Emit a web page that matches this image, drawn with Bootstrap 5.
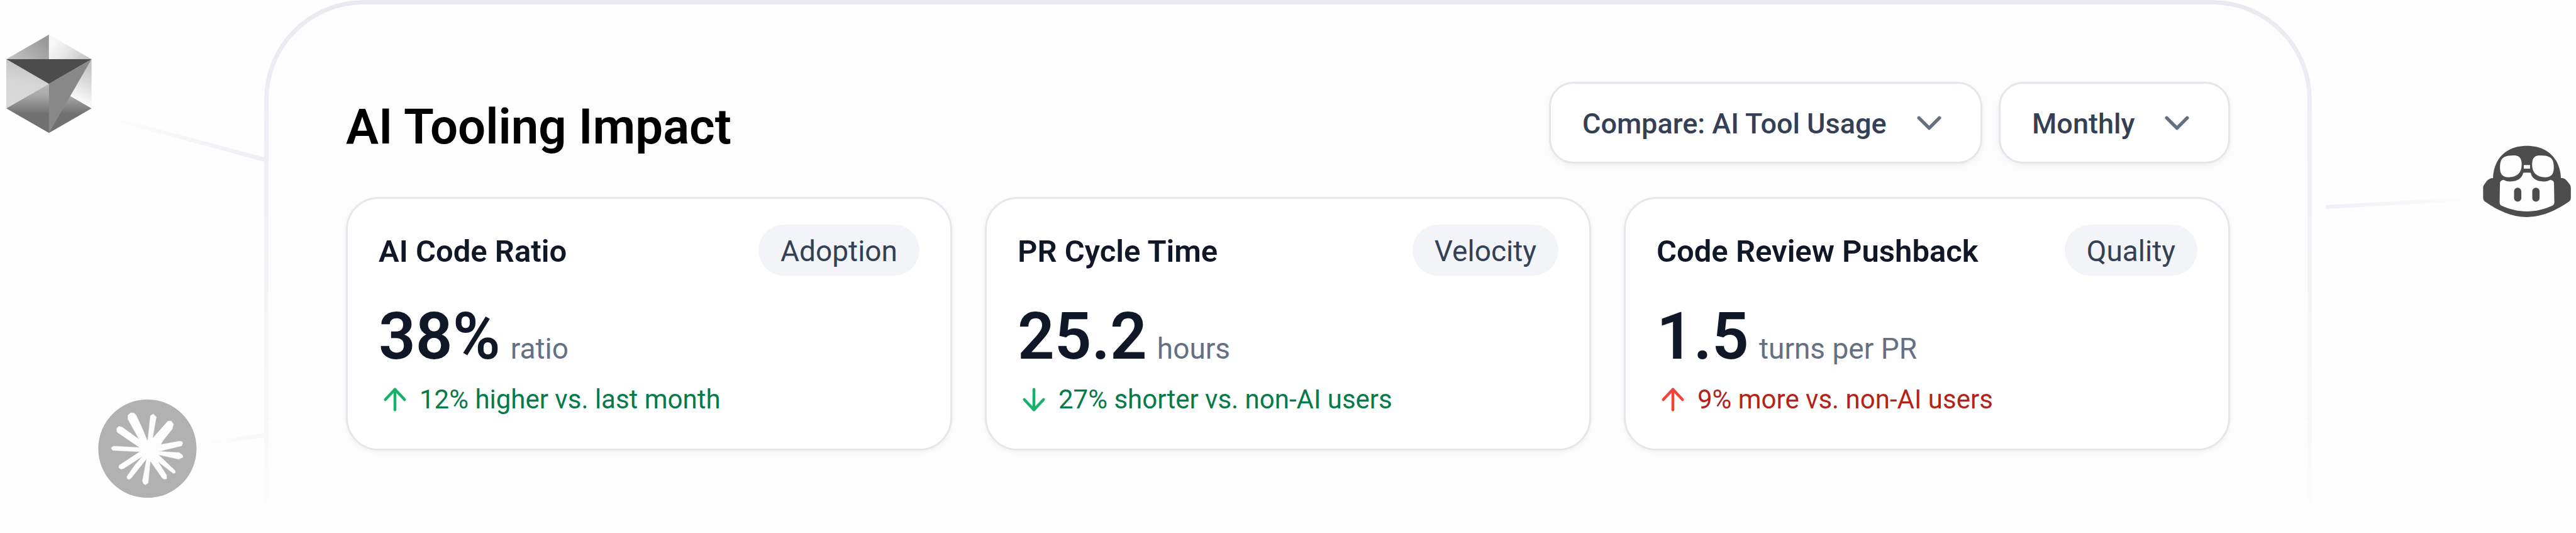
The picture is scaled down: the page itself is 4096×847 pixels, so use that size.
<!DOCTYPE html>
<html lang="en">
<head>
<meta charset="utf-8">
<meta name="viewport" content="width=device-width, initial-scale=1">
<title>AI Tooling Impact</title>
<link href="https://cdn.jsdelivr.net/npm/bootstrap@5.3.0/dist/css/bootstrap.min.css" rel="stylesheet">
<style>
  :root { --ink: #101828; --slate: #344054; --muted: #667085; --line: #e4e7ec; }
  body { background: #fefefe; color: var(--ink); font-family: Roboto, "Liberation Sans", sans-serif; }

  .stage { display: grid; grid-template-columns: 420px minmax(0, 1fr) 420px; min-height: 100vh; }
  .stage-side svg { width: 420px; height: 847px; }

  /* Panel: the frame fades away towards the bottom of the page */
  .impact-panel { position: relative; isolation: isolate; padding: 130px; }
  .impact-panel::before, .impact-panel::after {
    content: ""; position: absolute; inset: 0; z-index: -1;
    border-radius: 158px 158px 0 0;
  }
  .impact-panel::before {
    background: #fcfcfc;
    -webkit-mask-image: linear-gradient(#000 75%, transparent 98%);
    mask-image: linear-gradient(#000 75%, transparent 98%);
  }
  .impact-panel::after {
    border: 7px solid #e9eaf0; border-bottom: 0; pointer-events: none;
    -webkit-mask-image: linear-gradient(#000, transparent);
    mask-image: linear-gradient(#000, transparent);
  }

  .impact-head { margin-bottom: 53px; }
  .impact-title { font-size: 78px; line-height: 94px; font-weight: 600; color: #000; padding-top: 14px; }
  .impact-filters { gap: 26px; }

  .filter-select {
    width: auto; padding: 36px 148px 32px 50px;
    border: 3px solid #e4e6ec; border-radius: 39px;
    background-color: #fff; color: var(--slate);
    font-size: 45px; line-height: 56px; font-weight: 500;
    background-image: url("data:image/svg+xml,%3Csvg xmlns='http://www.w3.org/2000/svg' viewBox='0 0 20 20' fill='none' stroke='%23667085' stroke-width='1.67' stroke-linecap='round' stroke-linejoin='round'%3E%3Cpath d='M5 7.5l5 5 5-5'/%3E%3C/svg%3E");
    background-size: 65px 65px; background-position: right 49px center;
    box-shadow: 0 3px 7px rgba(16, 24, 40, .05);
  }

  .metric-row { --bs-gutter-x: 52px; --bs-gutter-y: 0; }
  .metric-card {
    padding: 41px 49px 49px; border: 3px solid var(--line); border-radius: 52px;
    background: #fff; box-shadow: 0 3px 7px rgba(16, 24, 40, .05);
  }
  .metric-name { font-size: 49px; line-height: 77px; font-weight: 600; padding-top: 4px; }
  .metric-tag {
    padding: 15px 35px 12px; border-radius: 41px; background: #f2f4f8;
    color: var(--slate); font-size: 46px; line-height: 54px;
  }
  .metric-figure { margin: 37px 0 10px; gap: 16px; }
  .metric-value { font-size: 103px; line-height: 120px; font-weight: 600; }
  .metric-unit { font-size: 46px; line-height: 54px; color: var(--muted); }
  .metric-trend { gap: 13px; font-size: 42px; line-height: 59px; }
  .metric-trend svg { width: 52px; height: 52px; flex: none; fill: none; stroke-width: 1.4; stroke-linecap: round; stroke-linejoin: round; }
  .trend-good { color: #067a48; } .trend-good svg { stroke: #17b26a; }
  .trend-bad { color: #b42318; } .trend-bad svg { stroke: #f04438; }
</style>
</head>
<body>
<div class="stage">
  <aside class="stage-side" aria-hidden="true">
    <svg class="d-block" viewBox="0 0 420 847">
      <defs>
        <linearGradient id="fadeA" gradientUnits="userSpaceOnUse" x1="172" y1="188" x2="420" y2="253"><stop stop-color="#f0f1f6" stop-opacity="0"/><stop offset=".6" stop-color="#f3f4f8"/><stop offset="1" stop-color="#eeeff5"/></linearGradient>
        <linearGradient id="fadeB" gradientUnits="userSpaceOnUse" x1="318" y1="706" x2="420" y2="692"><stop stop-color="#f7f8fb" stop-opacity="0"/><stop offset="1" stop-color="#f6f7fa"/></linearGradient>
        <linearGradient id="cubeTL" x1="0" y1="1" x2="1" y2=".4"><stop stop-color="#c6c6c6"/><stop offset="1" stop-color="#999"/></linearGradient>
        <linearGradient id="cubeTR" x1="0" y1=".6" x2="1" y2="1"><stop stop-color="#f8f8f8"/><stop offset=".4" stop-color="#e6e6e6"/><stop offset="1" stop-color="#bdbdbd"/></linearGradient>
        <linearGradient id="cubeL" x1=".4" y1="0" x2=".2" y2="1"><stop stop-color="#c4c4c4"/><stop offset=".45" stop-color="#d6d6d6"/><stop offset="1" stop-color="#d9d9d9"/></linearGradient>
        <linearGradient id="cubeB" gradientUnits="userSpaceOnUse" x1="0" y1="100" x2="0" y2="192"><stop stop-color="#b6b6b6"/><stop offset=".2" stop-color="#a8a8a8"/><stop offset=".6" stop-color="#707070"/><stop offset="1" stop-color="#707070"/></linearGradient>
        <linearGradient id="cubeR" gradientUnits="userSpaceOnUse" x1="166" y1="66" x2="136" y2="126"><stop stop-color="#c6c6c6"/><stop offset=".55" stop-color="#e2e2e2"/><stop offset="1" stop-color="#fafafa"/></linearGradient>
      </defs>
      <path fill="url(#fadeA)" d="M172 184L420 250V257L172 190Z"/>
      <path fill="url(#fadeB)" d="M318 703L420 688V695L318 710Z"/>
      <g transform="translate(10 55) scale(.814)">
        <path fill="url(#cubeTL)" d="M0 48L83.4 0V48Z"/>
        <path fill="url(#cubeTR)" d="M83.4 0L166.6 48H83.4Z"/>
        <path fill="url(#cubeL)" d="M0 48L83.4 96L0 144Z"/>
        <path fill="url(#cubeR)" d="M166.6 48V144L120 118Z"/>
        <path fill="url(#cubeB)" d="M0 144L83.4 96L125 120L166.6 144L83.4 192Z"/>
        <path fill="#888" d="M166.6 48L83.4 192V96Z"/>
        <path fill="#4c4c4c" d="M0 48H166.6L83.4 96Z"/>
      </g>
      <g transform="translate(130.2 602.3) scale(.2713)">
        <circle cx="384" cy="408" r="288" fill="#b1b1b1"/>
        <path fill="#fcfcfc" stroke="#fcfcfc" stroke-width="2" stroke-linejoin="round" d="M383 360L355 292L318 212L306 200L286 198L270 212L270 236L336 354L236 282L216 277L204 290L206 311L340 402L186 393L171 404L181 418L340 426L218 506L216 519L228 528L243 525L356 452L310 505L264 571L266 585L279 588L289 580L380 466L355 596L360 612L372 620L388 609L401 480L471 580L485 588L497 583L496 563L446 484L536 553L547 550L548 538L448 443L568 470L592 458L590 446L570 431L450 424L585 391L591 377L587 367L574 364L461 384L480 355L530 292L537 265L524 246L504 247L414 348L436 222L418 205L402 215L386 360Z"/>
      </g>
    </svg>
  </aside>

  <main class="impact-panel">
    <header class="impact-head d-flex justify-content-between align-items-center">
      <h1 class="impact-title mb-0">AI Tooling Impact</h1>
      <form class="impact-filters d-flex">
        <select class="form-select filter-select" aria-label="Comparison"><option>Compare: AI Tool Usage</option></select>
        <select class="form-select filter-select" aria-label="Period"><option>Monthly</option></select>
      </form>
    </header>

    <div class="row metric-row row-cols-3">
      <div class="col">
        <section class="metric-card h-100">
          <div class="d-flex justify-content-between align-items-center">
            <h2 class="metric-name mb-0">AI Code Ratio</h2>
            <span class="metric-tag">Adoption</span>
          </div>
          <div class="metric-figure d-flex align-items-baseline"><span class="metric-value">38%</span><span class="metric-unit">ratio</span></div>
          <div class="metric-trend trend-good d-flex align-items-center">
            <svg viewBox="0 0 16 16" aria-hidden="true"><path d="M8 13V3M3.3 8L8 3l4.7 5"/></svg>
            <span>12% higher vs. last month</span>
          </div>
        </section>
      </div>
      <div class="col">
        <section class="metric-card h-100">
          <div class="d-flex justify-content-between align-items-center">
            <h2 class="metric-name mb-0">PR Cycle Time</h2>
            <span class="metric-tag">Velocity</span>
          </div>
          <div class="metric-figure d-flex align-items-baseline"><span class="metric-value">25.2</span><span class="metric-unit">hours</span></div>
          <div class="metric-trend trend-good d-flex align-items-center">
            <svg viewBox="0 0 16 16" aria-hidden="true"><path d="M8 3v10M3.3 8L8 13l4.7-5"/></svg>
            <span>27% shorter vs. non-AI users</span>
          </div>
        </section>
      </div>
      <div class="col">
        <section class="metric-card h-100">
          <div class="d-flex justify-content-between align-items-center">
            <h2 class="metric-name mb-0">Code Review Pushback</h2>
            <span class="metric-tag">Quality</span>
          </div>
          <div class="metric-figure d-flex align-items-baseline"><span class="metric-value">1.5</span><span class="metric-unit">turns per PR</span></div>
          <div class="metric-trend trend-bad d-flex align-items-center">
            <svg viewBox="0 0 16 16" aria-hidden="true"><path d="M8 13V3M3.3 8L8 3l4.7 5"/></svg>
            <span>9% more vs. non-AI users</span>
          </div>
        </section>
      </div>
    </div>
  </main>

  <aside class="stage-side" aria-hidden="true">
    <svg class="d-block" viewBox="0 0 420 847">
      <defs>
        <linearGradient id="fadeC" gradientUnits="userSpaceOnUse" x1="23" y1="0" x2="258" y2="0"><stop stop-color="#eff0f6"/><stop offset=".5" stop-color="#f5f6f9"/><stop offset="1" stop-color="#f7f8fb" stop-opacity="0"/></linearGradient>
      </defs>
      <path fill="url(#fadeC)" d="M22 326L258 313V319L22 332Z"/>
      <g transform="translate(-13 195.4) scale(.2762 .2713)" fill="#4d4d4d">
        <path fill-rule="evenodd" d="M1090 323C1094 205 1170 134 1285 134C1400 134 1476 205 1481 323C1500 323 1508 330 1518 342L1533 362Q1538 370 1538 382V440Q1538 452 1528 460C1450 515 1370 551 1285 551C1200 551 1120 515 1043 460Q1033 452 1033 440V378Q1033 368 1040 360L1056 338Q1068 324 1090 323Z
          M1205 190C1238 189 1255 200 1255 245C1255 290 1230 318 1180 318C1145 318 1130 300 1130 262C1130 210 1145 191 1205 190Z
          M1365 190C1332 189 1315 200 1315 245C1315 290 1340 318 1390 318C1425 318 1440 300 1440 262C1440 210 1425 191 1365 190Z
          M1267 246H1303V268H1267Z
          M1264 292Q1285 290 1307 292C1313 325 1340 343 1382 343C1398 343 1410 339 1420 333Q1440 336 1441 352L1443 466Q1443 478 1432 484C1385 506 1335 518 1285 518C1235 518 1185 506 1138 484Q1127 478 1128 466L1130 352Q1131 337 1150 333C1160 339 1172 343 1190 343C1230 343 1257 325 1264 292Z"/>
        <rect x="1211" y="379" width="42" height="82" rx="21"/>
        <rect x="1316" y="379" width="42" height="82" rx="21"/>
      </g>
    </svg>
  </aside>
</div>
<script src="https://cdn.jsdelivr.net/npm/bootstrap@5.3.0/dist/js/bootstrap.bundle.min.js"></script>
</body>
</html>
